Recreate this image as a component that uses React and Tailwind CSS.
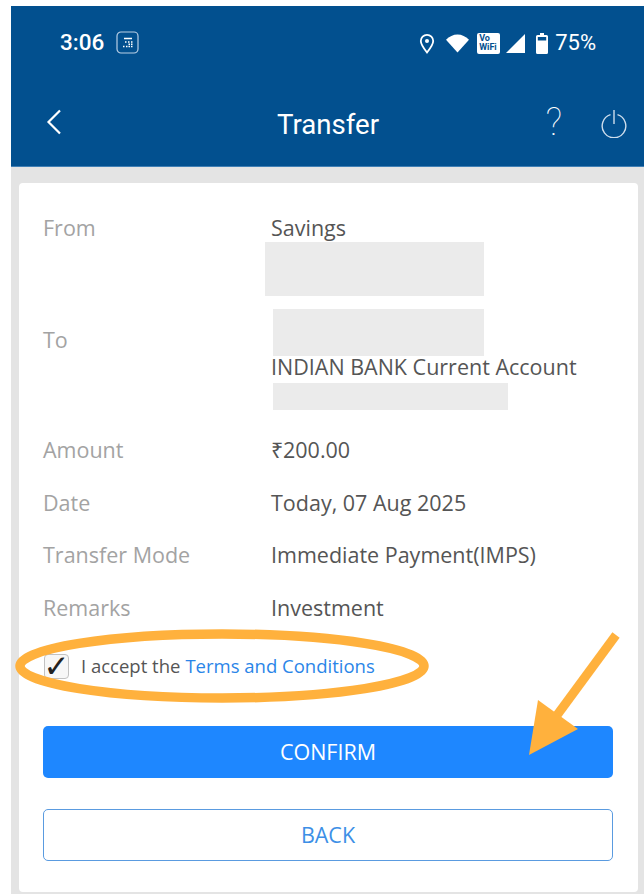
const font = { fontFamily: '"Open Sans", sans-serif' };

function StatusBar() {
  return (
    <div className="flex h-[74px] items-center justify-between pl-[49px] pr-[48px] text-white" style={{ fontFamily: 'Roboto, sans-serif' }}>
      <div className="flex items-center gap-[12px]">
        <span className="mb-[2px] text-[22.500px] font-medium leading-[30px]">3:06</span>
        <svg width="23" height="23" viewBox="0 0 23 23" fill="none" className="mb-[2px]">
          <rect x="1" y="1" width="21" height="21" rx="4" stroke="#b9cfe6" strokeWidth="1.2" />
          <path d="M8 7.500h8M12 11h1.500M15 11h1.500M9 11h1.500M7 15.500h1.500M10 15.500h1.500M12.500 15.500h1.500M15 15.500h1.500M12.500 13.300h1.500M15 13.300h1.500" stroke="#fff" strokeWidth="1.6" />
        </svg>
      </div>
      <div className="flex items-center">
        <svg width="16" height="21" viewBox="0 0 16 21" fill="none" className="mr-[11px]">
          <path d="M8 19.500C4 14.500 1.800 11.500 1.800 8a6.200 6.200 0 0 1 12.400 0c0 3.500-2.200 6.500-6.200 11.500z" stroke="#fff" strokeWidth="1.8" />
          <circle cx="8" cy="8" r="2" fill="#fff" />
        </svg>
        <svg width="23" height="19" viewBox="0 0 24 19" className="mr-[8px]">
          <path d="M0 5.500C3.500 2 7.500 0 12 0s8.500 2 12 5.500L12 19z" fill="#fff" />
        </svg>
        <div className="mr-[6px] flex h-[21px] w-[23px] flex-col rounded-[2px] bg-white pl-[2px] text-[9px] font-bold leading-[9.500px] text-[#02508f]">
          <span className="pt-[1px]">Vo</span>
          <span>WiFi</span>
        </div>
        <svg width="19" height="19" viewBox="0 0 19 19" className="mr-[11px]">
          <path d="M19 0v19H0z" fill="#fff" />
        </svg>
        <svg width="12" height="21" viewBox="0 0 12 21" className="mr-[7px]">
          <path d="M4 0h4v2h2.500A1.500 1.500 0 0 1 12 3.500V19.500A1.500 1.500 0 0 1 10.500 21h-9A1.500 1.500 0 0 1 0 19.500V3.500A1.500 1.500 0 0 1 1.500 2H4z" fill="#fff" />
          <rect x="1.800" y="4" width="8.400" height="3.500" fill="#02508f" />
        </svg>
        <span className="text-[22px] leading-[30px]">75%</span>
      </div>
    </div>
  );
}

function NavBar() {
  return (
    <div className="relative flex h-[86px] items-center justify-between pl-[35px] pr-[17px] text-white">
      <svg width="16" height="26" viewBox="0 0 16 26" fill="none" className="mb-[2px]">
        <path d="M14 1.500 2.500 13 14 24.500" stroke="#fff" strokeWidth="2.200" />
      </svg>
      <span className="absolute left-[266px] top-[25px] text-[27.600px] leading-[40px]" style={{ fontFamily: 'Roboto, sans-serif' }}>Transfer</span>
      <div className="flex items-center gap-[39px]">
        <span className="mb-[2px] text-[38px] font-thin leading-[40px] text-white" style={{ fontFamily: 'Roboto, sans-serif' }}>?</span>
        <svg width="26" height="28" viewBox="0 0 26 28" fill="none" className="mt-[1px]">
          <path d="M9.500 4.700a11.800 11.800 0 1 0 7 0M13 0v14" stroke="#cfdeec" strokeWidth="1.400" />
        </svg>
      </div>
    </div>
  );
}

function Row({ label, children, className = '' }) {
  return (
    <div className={`flex items-center text-[21.500px] leading-[30px] ${className}`}>
      <div className="w-[228px] shrink-0 text-[#a3a3a3]">{label}</div>
      <div className="text-[#555555]">{children}</div>
    </div>
  );
}

function Annotations() {
  return (
    <svg width="644" height="894" viewBox="0 0 644 894" fill="none" className="pointer-events-none absolute left-0 top-0">
      <ellipse cx="222" cy="666" rx="202" ry="32" stroke="#ffb13d" strokeWidth="9.500" />
      <path d="M616 635 552 722" stroke="#ffb13d" strokeWidth="9" />
      <path d="M538 700 578 729 529 755z" fill="#ffb13d" />
    </svg>
  );
}

export default function App() {
  return (
    <div className="relative h-[894px] w-[644px] overflow-hidden bg-white pl-[11px] pt-[6px]" style={font}>
      <header className="h-[161px] border-b border-[#3f7fb5] bg-[#02508f]">
        <StatusBar />
        <NavBar />
      </header>

      <main className="h-[727px] bg-[#e4e4e4] pb-[2px] pl-[8px] pr-[6px] pt-[16px]">
        <div className="h-[709px] rounded-[4px] bg-white px-[24px] pt-[30px]">
          <Row label="From">Savings</Row>

          <div className="flex text-[21.500px] leading-[30px]">
            <div className="w-[228px] shrink-0 pt-[82px] text-[#a3a3a3]">To</div>
            <div className="text-[#555555]">
              <div className="-ml-[6px] mt-[-1px] h-[54px] w-[219px] bg-[#ebebeb]" />
              <div className="ml-[2px] mt-[13px] h-[47px] w-[211px] bg-[#ebebeb]" />
              <div className="mt-[-4px] whitespace-nowrap">INDIAN BANK Current Account</div>
              <div className="ml-[2px] mt-[1px] h-[27px] w-[235px] bg-[#ebebeb]" />
            </div>
          </div>

          <Row label="Amount" className="mt-[25px]">₹200.00</Row>
          <Row label="Date" className="mt-[23px]">Today, 07 Aug 2025</Row>
          <Row label="Transfer Mode" className="mt-[22px]">Immediate Payment(IMPS)</Row>
          <Row label="Remarks" className="mt-[23px]">Investment</Row>

          <label className="mt-[30px] flex h-[26px] items-center text-[18.500px] leading-[26px]">
            <span className="ml-[1px] flex h-[25px] w-[25px] items-center justify-center rounded-[4px] border border-[#c2c2c2] bg-[#f7f7f7] text-[31px] leading-none text-[#222222]" style={{ fontFamily: '"DejaVu Sans", sans-serif' }}>
              ✓
            </span>
            <span className="ml-[12px] text-[#555555]">I accept the</span>
            <span className="ml-[5px] text-[#2a85e8]">Terms and Conditions</span>
          </label>

          <button className="mt-[47px] flex h-[52px] w-[570px] items-center justify-center rounded-[5px] bg-[#1e87ff] text-[21.500px] text-white">
            CONFIRM
          </button>
          <button className="mt-[31px] flex h-[52px] w-[570px] items-center justify-center rounded-[5px] border-[1.500px] border-[#5a9be0] bg-white text-[21.500px] text-[#3d8fe6]">
            BACK
          </button>
        </div>
      </main>

      <Annotations />
    </div>
  );
}
